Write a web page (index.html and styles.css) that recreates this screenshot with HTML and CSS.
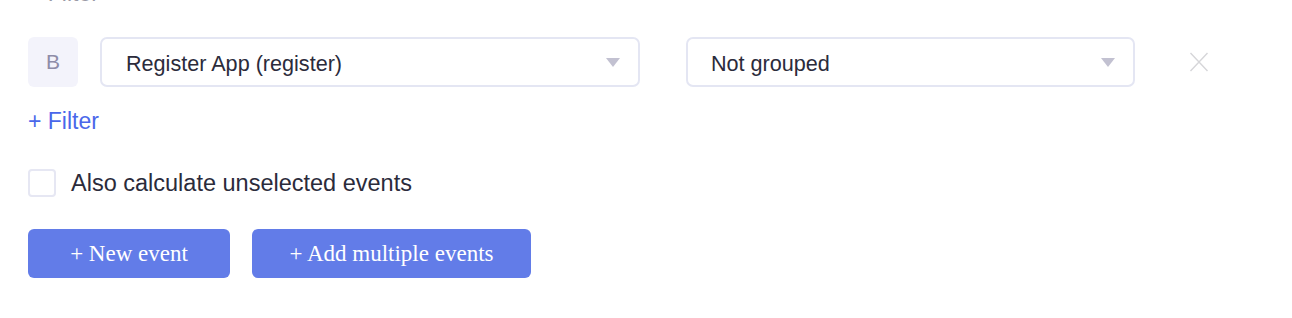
FILE: index.html
```html
<!doctype html>
<html lang="en">
	<head>
		<meta charset="UTF-8" />
		<title>Events</title>
		<link rel="stylesheet" href="styles.css">
	</head>
	<body>
		<div class="panel">
			<a class="filter filter-prev">+ Filter</a>
			<div class="event-row">
				<div class="badge">B</div>
				<div class="select select-event">
					<span class="select-value">Register App (register)</span>
					<span class="caret"></span>
				</div>
				<div class="select select-group">
					<span class="select-value">Not grouped</span>
					<span class="caret"></span>
				</div>
				<span class="remove">
					<svg width="20" height="20" viewBox="0 0 20 20">
						<path d="M1.5 1 L18.5 19 M18.5 1 L1.5 19" stroke="#d6d6d9" stroke-width="1.4" fill="none" />
					</svg>
				</span>
			</div>
			<a class="filter">+ Filter</a>
			<label class="check-row">
				<span class="checkbox"></span>
				<span>Also calculate unselected events</span>
			</label>
			<div class="actions">
				<button class="btn btn-new">+ New event</button>
				<button class="btn btn-multi">+ Add multiple events</button>
			</div>
		</div>
	</body>
</html>
```

FILE: styles.css
```css
* {
	margin: 0;
	padding: 0;
	box-sizing: border-box;
}
body {
	font-family: "Liberation Sans", Arial, sans-serif;
	color: #2b2b3b;
	background: #fff;
}
.panel {
	padding: 0 28px;
	margin-top: -20px;
}
.filter {
	display: block;
	font-size: 23px;
	line-height: 26px;
	color: #4a67ea;
	cursor: pointer;
}
.filter-prev {
	color: #9a9aa6;
}
.event-row {
	display: flex;
	align-items: center;
	margin-top: 31px;
}
.badge {
	width: 50px;
	height: 50px;
	border-radius: 6px;
	background: #f3f3fb;
	color: #8e8ca8;
	font-size: 21px;
	display: flex;
	align-items: center;
	justify-content: center;
	margin-right: 22px;
}
.select {
	height: 50px;
	border: 2px solid #e4e6f3;
	border-radius: 7px;
	display: flex;
	align-items: center;
	justify-content: space-between;
	padding: 0 18px 0 24px;
	font-size: 21.6px;
}
.select-value {
	padding-top: 3px;
}
.select-event {
	width: 540px;
}
.select-group {
	width: 449px;
	margin-left: 46px;
	padding-left: 23px;
}
.caret {
	width: 0;
	height: 0;
	border-left: 7px solid transparent;
	border-right: 7px solid transparent;
	border-top: 9px solid #c2c1d1;
}
.remove {
	display: flex;
	margin-left: 54px;
}
.event-row + .filter {
	margin-top: 21px;
}
.check-row {
	display: flex;
	align-items: center;
	gap: 15px;
	font-size: 23.5px;
	margin-top: 35px;
}
.checkbox {
	width: 28px;
	height: 28px;
	border: 2px solid #e6e7f3;
	border-radius: 4px;
}
.actions {
	display: flex;
	gap: 22px;
	margin-top: 32px;
}
.btn {
	height: 49px;
	border: none;
	border-radius: 6px;
	background: #627ce8;
	color: #fff;
	font-family: "Liberation Serif", "Times New Roman", serif;
	font-size: 23px;
	cursor: pointer;
}
.btn-new {
	width: 202px;
}
.btn-multi {
	width: 279px;
}
```
